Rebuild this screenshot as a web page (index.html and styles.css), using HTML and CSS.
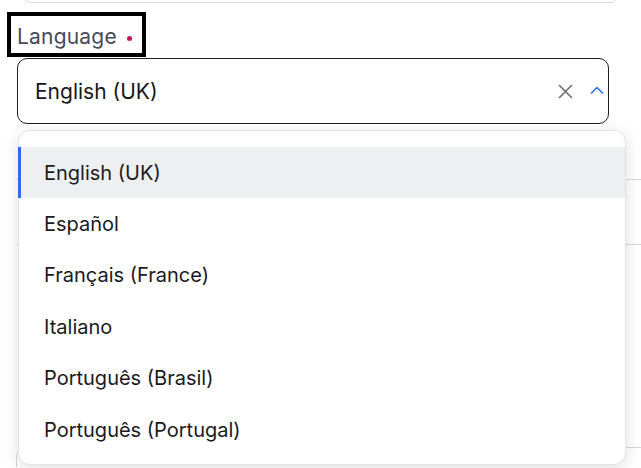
FILE: index.html
```html
<!DOCTYPE html>
<html lang="en">
<head>
<meta charset="utf-8">
<title>Language</title>
<link rel="stylesheet" href="styles.css">
</head>
<body>
<div class="page">
  <div class="prev-field"></div>
  <div class="field">
    <div class="label-row">
      <label class="label">Language</label><span class="req"></span>
    </div>
    <div class="select">
      <span class="value">English (UK)</span>
      <span class="icons">
        <svg class="clear" width="15" height="15" viewBox="0 0 15 15"><path d="M1.5 1.5 L13.5 13.5 M13.5 1.5 L1.5 13.5" stroke="#6b6b73" stroke-width="1.6" fill="none" stroke-linecap="round"/></svg>
        <svg class="chev" width="14" height="8" viewBox="0 0 14 8"><path d="M1.5 7 L7 1.5 L12.5 7" stroke="#2f6ef2" stroke-width="1.6" fill="none" stroke-linecap="round" stroke-linejoin="round"/></svg>
      </span>
    </div>
    <ul class="menu">
      <li class="item active">English (UK)</li>
      <li class="item">Español</li>
      <li class="item">Français (France)</li>
      <li class="item">Italiano</li>
      <li class="item">Português (Brasil)</li>
      <li class="item">Português (Portugal)</li>
    </ul>
  </div>
  <div class="under-field"></div>
  <div class="under-block"></div>
</div>
</body>
</html>
```
FILE: styles.css
```css
* { box-sizing: border-box; }
html, body { margin: 0; padding: 0; background: #fff; }
body {
  font-family: Inter, "Noto Sans", "Liberation Sans", sans-serif;
  overflow: hidden;
  width: 641px;
  height: 468px;
}
.page { position: relative; height: 468px; overflow: hidden; }
.prev-field {
  margin: -40px 21px 0 21px;
  height: 43px;
  border: 1px solid #dcdcdf;
  border-radius: 10px;
}
.field {
  position: relative;
  padding: 0 32px 0 17px;
}
.label-row {
  display: inline-flex;
  align-items: center;
  margin: 9px 0 0 -10px;
  padding: 3px 10px 0 6px;
  border: 4px solid #000;
  height: 45px;
}
.label {
  font-size: 21px;
  color: #4a4a59;
  letter-spacing: 0.2px;
}
.req {
  width: 5px;
  height: 5px;
  border-radius: 50%;
  background: #c2185b;
  margin-left: 10px;
  margin-top: 4px;
}
.select {
  margin-top: 1px;
  height: 66px;
  border: 1.5px solid #1d1d22;
  border-radius: 10px;
  display: flex;
  align-items: center;
  justify-content: space-between;
  padding: 0 4px 0 17px;
}
.value {
  font-size: 21px;
  color: #16161a;
  margin-top: 1px;
}
.icons {
  display: flex;
  align-items: center;
  gap: 17px;
}
.clear { margin-top: 0; }
.chev { margin-top: -3px; }
.menu {
  position: absolute;
  left: 18px;
  top: 127px;
  width: 608px;
  height: 335px;
  margin: 0;
  padding: 16px 0 11px 0;
  list-style: none;
  background: #fff;
  border: 1px solid #e3e3e6;
  border-radius: 12px;
  box-shadow: 0 3px 16px rgba(0, 0, 0, 0.13);
  z-index: 2;
}
.item {
  height: 51.4px;
  display: flex;
  align-items: center;
  padding-left: 23px;
  font-size: 20px;
  color: #1a1a1f;
  border-left: 3px solid transparent;
  margin-left: -1px;
}
.item.active {
  background: #eeeff1;
  border-left-color: #2f6bf0;
}
.under-field {
  margin: 55px 0 0 17px;
  height: 66px;
  border-top: 1.5px solid #d6d6d9;
  border-bottom: 1.5px solid #d6d6d9;
}
.under-block {
  margin: 202px 0 0 16px;
  height: 20px;
  border-top: 1.5px solid #d6d6d9;
  border-left: 1.5px solid #d6d6d9;
  border-top-left-radius: 10px;
}
```
